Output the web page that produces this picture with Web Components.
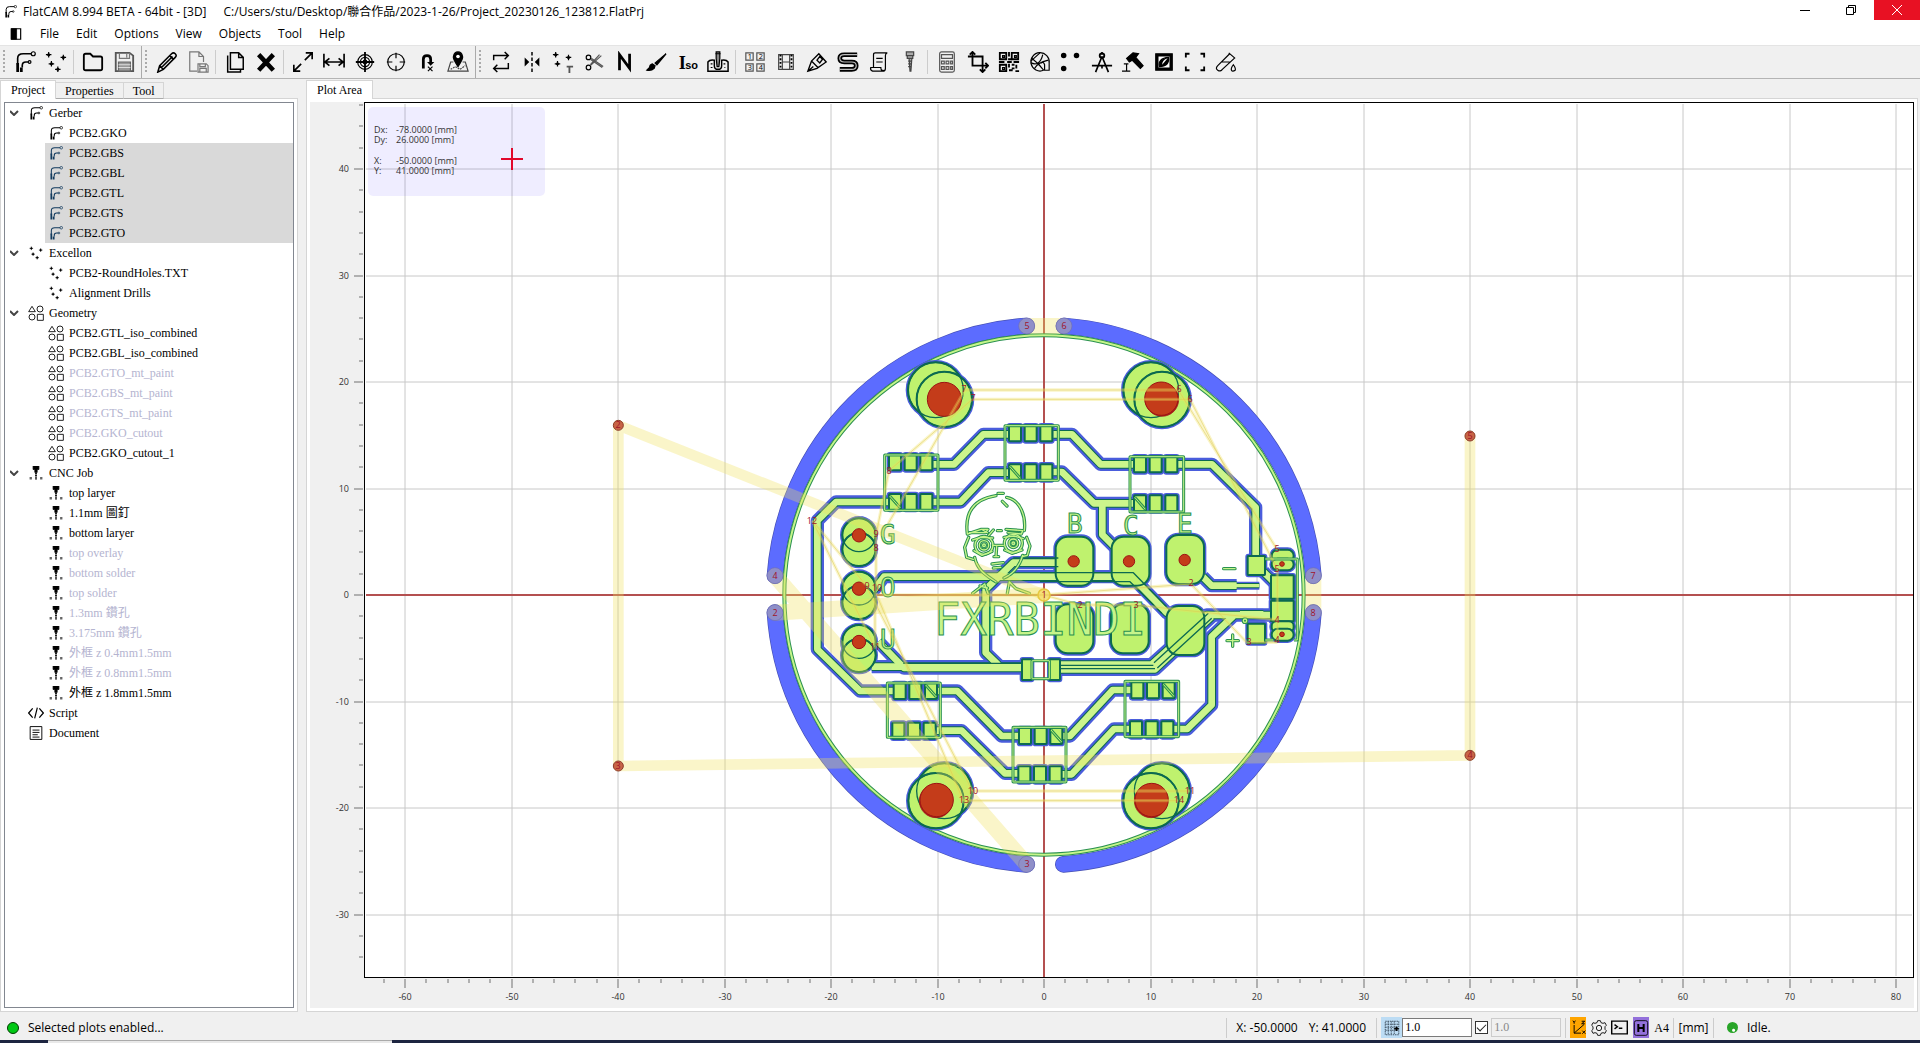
<!DOCTYPE html>
<html lang="en">
<head>
<meta charset="utf-8">
<title>FlatCAM 8.994 BETA - 64bit - [3D]</title>
<style>
html, body { margin: 0; height: 100%; }
body { font: 12px/16px "Open Sans", "Noto Sans CJK TC", sans-serif; color: #000; background: #f0f0f0; overflow: hidden; }
</style>
</head>
<body>
<fc-app>
  <fc-titlebar slot="title" app="FlatCAM 8.994 BETA - 64bit - [3D]" path="C:/Users/stu/Desktop/聯合作品/2023-1-26/Project_20230126_123812.FlatPrj"></fc-titlebar>
  <fc-menubar slot="menu" items="File,Edit,Options,View,Objects,Tool,Help"></fc-menubar>
  <fc-toolbar slot="tools" icons="gerber drills | folder save"></fc-toolbar>
  <fc-toolbar slot="tools" icons="pencil docsave | copy delete | expand distance target locate uturn map"></fc-toolbar>
  <fc-toolbar slot="tools" icons="swap mirror drillt scissors ncc brush iso mill | panel film marker paste script screw | calc crop qr punch dots compass hammer invert corners tube"></fc-toolbar>
  <fc-tabs slot="side" labels="Project,Properties,Tool"><fc-tree></fc-tree></fc-tabs>
  <fc-tabs slot="main" labels="Plot Area"><fc-plot></fc-plot></fc-tabs>
  <fc-status slot="status"></fc-status>
</fc-app>
<script>
const T = (x, y, s, size, extra = '') => `<text x="${x}" y="${y}" font-size="${size}" fill="currentColor" stroke="none" ${extra}>${s}</text>`;
const plus = (x, y, r = 3) => `<path d="M${x - r} ${y}h${2 * r}M${x} ${y - r}v${2 * r}"/><circle cx="${x}" cy="${y}" r="1" fill="currentColor"/>`;
const ICONS = {
  gerber: '<path d="M4 15V8q0-5 6-5h9M9 18v-2q0-4 4-4h3" stroke-width="1.8"/><path d="M4 13v10M8 18v5" stroke-width="3"/><circle cx="21" cy="3" r="2.2"/><circle cx="17" cy="12" r="1.5"/>',
  drills: plus(4, 4) + plus(20, 7) + plus(7, 14) + plus(14, 20),
  folder: '<path d="M2 19V5q0-2 2-2h5l3 3h8q2 0 2 2v11q0 2-2 2H4q-2 0-2-2z" stroke-width="2"/>',
  save: '<path d="M3 2h15l4 3v17H3z" stroke="#555" stroke-width="2"/><path d="M7 2v6h11V2M15 3v4" stroke="#777"/><path d="M6 12h13v10H6z" fill="#999" stroke="#666"/><path d="M6 15h13M6 18h13" stroke="#ddd"/>',
  pencil: '<path d="M2 23l2-7L17 3q2-2 4 0t0 4L8 20zM4 16l4 4M15 5l4 4M6 18L18 6" stroke-width="1.7"/>',
  docsave: '<path d="M11 22H3V1h10l5 5v6M13 1v5h5" stroke="#777"/><path d="M12 14h9l2 2v7H12zM14 14v3h6v-3M14 23v-4h7v4" stroke="#777"/>',
  copy: '<path d="M4 5v18h14v-3" stroke-width="1.6"/><path d="M7 2h9l5 5v13H7zM16 2v5h5" stroke-width="1.6"/>',
  delete: '<path d="M4 4l16 17M20 4L4 21" stroke-width="5"/>',
  expand: '<path d="M2 22l8-8M14 10l8-8M15 2h7v7M2 15v7h7" stroke-width="1.8"/>',
  distance: '<path d="M1 3v15M23 3v15M2 12h20M7 8l-5 4 5 4M17 8l5 4-5 4" stroke-width="1.8"/>',
  target: '<circle cx="12" cy="12" r="8"/><circle cx="12" cy="12" r="5"/><circle cx="12" cy="12" r="2" /><path d="M12 1v22M2 12h20" stroke-width="2"/>',
  locate: '<circle cx="12" cy="12" r="9"/><path d="M12 2v6M12 16v6M2 12h6M16 12h6"/>',
  uturn: '<path d="M8 19V9q0-4 4-4t4 4v4" stroke-width="3"/><path d="M12 12h8l-4 4z" fill="currentColor" stroke="none"/><path d="M13 17l5 5M18 17l-5 5"/>',
  map: '<path d="M7 12H4L1 22h22l-3-10h-3" stroke="#444"/><path d="M4 20l5-3 5 3 6-4" stroke-dasharray="2 1" stroke="#444"/><path d="M12 17Q6 8 7 6q1-5 5-5t5 5q1 2-5 11z" fill="currentColor"/><circle cx="12" cy="6" r="2" fill="#fff" stroke="none"/>',
  swap: '<path d="M4 10V5h16M16 1l4 4-4 4M20 13v6H4M8 15l-4 4 4 4" stroke-width="1.6"/>',
  mirror: '<path d="M12 1v22" stroke-dasharray="4 2" stroke-width="1.6"/><path d="M4 7l5 5-5 5zM20 7l-5 5 5 5z" fill="currentColor" stroke="none"/>',
  drillt: plus(4, 4) + plus(18, 7) + plus(6, 14) + '<path d="M16 17h7M19 17v7" stroke-width="2" stroke="#555"/>',
  scissors: '<circle cx="6" cy="7" r="2.5"/><circle cx="6" cy="18" r="2.5"/><path d="M8 9l13 9M8 16L20 5M9 8l13 9M8 15L18 4" stroke="#555"/>',
  ncc: '<path d="M6 21V4l11 15V3" stroke-width="3"/>',
  brush: '<path d="M23 3L11 13l2 2z" fill="currentColor"/><path d="M2 21q5 1 8-2l1-3-3-2q-3 1-3 4z" fill="currentColor"/>',
  iso: T(3, 20, 'I', 20, 'font-family="Liberation Serif" font-weight="bold"') + T(10, 20, 'so', 12, 'font-family="Liberation Sans" font-weight="bold"'),
  mill: '<path d="M10 1h4v7l-1 9h-2L10 8zM9 3h6" fill="#888"/><path d="M1 22V12q2-3 7-2v6q0 4 4 4t4-4v-6q5-1 7 2v10z" stroke-width="1.6"/><path d="M4 14h2M18 14h2M4 18h2M19 18h1"/>',
  panel: '<path d="M2 2h8v8H2zM14 2h8v8h-8zM2 14h8v8H2zM14 14h8v8h-8z" stroke="#555"/>' + T(4, 9, '1', 8) + T(16, 9, '2', 8) + T(4, 21, '3', 8) + T(16, 21, '4', 8),
  film: '<path d="M4 4h16v16H4zM8 4v16M16 4v16M8 12h8" stroke="#444"/><path d="M6 4v16M18 4v16" stroke-dasharray="2 2" stroke-width="2"/>',
  marker: '<path d="M2 22l4-11 8-8 8 9-10 7zM6 11l7 7M12 10l3-4 3 3-3 4zM2 22l6-5" stroke-width="1.5"/>',
  paste: '<path d="M22 4H8q-5 0-5 4t5 4h8q5 0 5 4t-5 4H3" stroke-width="5"/><path d="M22 4H8q-5 0-5 4t5 4h8q5 0 5 4t-5 4H3" stroke="#bbb"/>',
  script: '<path d="M6 18V4q0-2 2-2h13q-2 1-2 3v14q0 3-3 3H5q-3-1-2-4h11q0 4 3 3M9 8h7M9 12h7"/>',
  screw: '<path d="M8 1h8v4H8zM9 5h6v3H9zM10 8h4l-1 14h-1L11 8M10 11h4M10 14h4M10 17h4" fill="#aaa" stroke="#444"/>',
  calc: '<rect x="4" y="1" width="16" height="22" rx="2" stroke="#555"/><path d="M6 4h12v4H6zM6 11h3v3H6zM11 11h3v3h-3zM16 11h2v3h-2zM6 17h3v3H6zM11 17h3v3h-3zM16 17h2v3h-2z" stroke="#555"/>',
  crop: '<path d="M6 1v15h17M1 6h16v16M3 4l3-3 3 3M20 13l3 3-3 3M14 20l3 3 3-3" stroke-width="2"/>',
  qr: '<path d="M2 2h7v7H2zM15 2h7v7h-7zM2 15h7v7H2z" stroke-width="2"/><path d="M5 5h2v2H5zM18 5h2v2h-2zM5 18h2v2H5z"/><path d="M12 1v5M11 9h4M1 12h6M10 12h5M17 12h6M12 14v4M15 15h3M20 15v4M15 19h3M12 21h4M19 22h4" stroke-width="2"/>',
  punch: '<path d="M16 21A10 10 0 1 1 22 13v8h-5v-6q-1-4-4-2"/><path d="M2 11l10-9M3 8q8 6 13 13M2 13q10 4 13-9M6 19q3-6 15-9"/>',
  dots: '<g fill="currentColor" stroke="none"><circle cx="4" cy="5" r="3"/><circle cx="18" cy="5" r="3"/><circle cx="4" cy="19" r="3"/></g>',
  compass: '<path d="M12 6L5 23M12 6l7 17M1 16h22M12 1v3M12 15v4" stroke-width="1.8"/><circle cx="12" cy="5" r="2.5" stroke-width="2"/>',
  hammer: '<path d="M5 8l7-6 6 1-3 4 8 9-3 3-9-9-3 2z" fill="currentColor"/><path d="M0 22h9M5 22v-8M2 14h5"/>',
  invert: '<path d="M3 3h18v18H3z" fill="currentColor"/><path d="M6 6h12v12H6z" fill="#fff" stroke="none"/><path d="M7 17q-2-9 10-10 1 10-10 10z" fill="currentColor"/><path d="M10 15q0-5 6-7z" fill="#fff" stroke="none"/>',
  corners: '<path d="M2 7V3h4M18 3h4v4M22 17v4h-4M6 21H2v-4" stroke-width="2"/>',
  tube: '<path d="M15 2l7 6M16 3L3 16q-3 3 0 5t5-1L21 8M7 12h9"/><path d="M20 15q-3 4-2 6t4 0q1-2-2-6z"/>',
  geometry: '<path d="M6 2l5 8H1z"/><circle cx="18" cy="6" r="4.5"/><circle cx="6" cy="18" r="4.5"/><path d="M14 14h9v9h-9z"/>',
  cnc: '<path d="M7 0h10v6h-3v5h-4V6H7z" fill="currentColor"/><path d="M12 12v11" stroke-width="3" stroke-dasharray="2 1"/><path d="M1 21h4M19 21h4" stroke-width="4" stroke="#666"/>',
  code: '<path d="M7 5L1 12l6 7M17 5l6 7-6 7M14 4l-4 16" stroke-width="1.8"/>',
  document: '<path d="M2 1h20v22H2z" stroke-width="1.6"/><path d="M6 7h12M6 11h12M6 15h9M6 19h12" stroke-width="1.6"/>',
  contrast: '<path d="M4 3h16v18H4z" stroke-width="2"/><path d="M4 3h9v18H4z" fill="currentColor"/>',
  gridsnap: '<path d="M3 3h18v18H3zM7 3v18M11 3v18M15 3v18M3 7h18M3 11h18M3 15h18" stroke="#456" stroke-dasharray="2 1"/><path d="M18 10v6M15 13h6" stroke-width="2"/>',
  axes: '<path d="M5 8v13h11M5 21L21 7M3 1l2 3 2-3M5 4v2M17 2h5l-5 4h5M18 17l5 5M23 17l-5 5" stroke-width="1.5"/>',
  gear: '<circle cx="12" cy="12" r="4"/><path d="M10 1h4l1 3 3 1 3-1 2 4-2 2v4l2 2-2 4-3-1-3 1-1 3h-4l-1-3-3-1-3 1-2-4 2-2v-4L1 8l2-4 3 1 3-1z"/>',
  terminal: '<path d="M1 3h22v18H1z" stroke-width="2"/><path d="M5 8l4 3-4 3M11 13h5" stroke-width="2"/>',
  hud: '<rect x="2" y="1" width="20" height="22" rx="3"/><path d="M8 6v12M16 6v12M8 12h8" stroke-width="3"/>'
};
const icon = (name, size) => `<svg width="${size}" height="${size}" viewBox="0 0 24 24" fill="none" stroke="currentColor" stroke-width="1.3" aria-hidden="true">${ICONS[name]}</svg>`;
const BASE = `:host,*{box-sizing:border-box} svg{display:block;flex:none} button,input{font:inherit;color:inherit;margin:0} button{border:0;background:none;padding:0}`;
function define(name, render) {
  customElements.define(name, class extends HTMLElement {
    connectedCallback() {
      if (this.shadowRoot) return;
      this.attachShadow({ mode: 'open' }).innerHTML = render(this);
    }
  });
}

define('fc-app', () => `<style>${BASE}
  :host{display:flex;flex-direction:column;height:100vh;background:#f0f0f0}
  .tools{display:flex;height:34px;border-top:1px solid #e4e4e4;border-bottom:1px solid #b4b4b4;background:#f0f0f0}
  .work{flex:1;min-height:0;display:flex;gap:8px;padding:1px 2px 0 0}
  .side{flex:none;width:298px;display:flex}
  .main{flex:1;min-width:0;display:flex}
  .os{height:3px;display:flex;background:#1d2540}
  .os span{margin-left:48px;width:344px;background:#e9e9e9;border-top:1px solid #aaa}
  </style>
  <slot name="title"></slot><slot name="menu"></slot>
  <div class="tools"><slot name="tools"></slot></div>
  <div class="work"><div class="side"><slot name="side"></slot></div><div class="main"><slot name="main"></slot></div></div>
  <slot name="status"></slot><div class="os"><span></span></div>`);

define('fc-titlebar', el => `<style>${BASE}
  :host{display:flex;align-items:center;height:23px;background:#fff;padding-left:4px}
  .t{margin-left:6px;white-space:pre} .p{margin-left:17px;flex:1;white-space:pre}
  .w{align-self:flex-start;width:46px;height:20px;display:grid;place-items:center}
  .x{background:#e81123;color:#fff}
  </style>${icon('gerber', 13)}<span class="t">${el.getAttribute('app')}</span><span class="p">${el.getAttribute('path')}</span>
  <button class="w" aria-label="Minimize"><svg width="10" height="10"><path d="M0 5h10v1H0z"/></svg></button>
  <button class="w" aria-label="Restore"><svg width="10" height="10" fill="none" stroke="#000"><path d="M.5 2.5h7v7h-7zM2.5 2.5v-2h7v7h-2"/></svg></button>
  <button class="w x" aria-label="Close"><svg width="10" height="10" stroke="#fff"><path d="M0 0l10 10M10 0L0 10"/></svg></button>`);

define('fc-menubar', el => `<style>${BASE}
  :host{display:flex;align-items:center;gap:17px;height:22px;background:#fff;padding-left:9px}
  </style>${icon('contrast', 14)}${el.getAttribute('items').split(',').map(t => `<button>${t}</button>`).join('')}`);

define('fc-toolbar', el => `<style>${BASE}
  :host{display:flex;align-items:center;padding:0 2px 0 3px;border-right:1px solid #aaa;flex:none}
  :host(:last-of-type){border-right:0}
  .g{width:2px;height:24px;margin-right:4px;background:repeating-linear-gradient(#aaa 0 2px,transparent 2px 4px)}
  button{width:31px;height:30px;display:grid;place-items:center}
  i{width:1px;height:24px;background:#ccc;margin:0 3px 0 2px}
  </style><span class="g"></span>${el.getAttribute('icons').split(' ').map(n => n === '|' ? '<i></i>' : `<button aria-label="${n}">${icon(n, 22)}</button>`).join('')}`);

define('fc-tabs', el => `<style>${BASE}
  :host{display:flex;flex-direction:column;flex:1;min-width:0;font-family:"Liberation Serif","Noto Sans CJK TC",serif}
  .tabs{display:flex;align-items:flex-end;height:19px;margin-bottom:-1px;position:relative}
  button{height:17px;padding:0 9px;border:1px solid #d5d5d5;border-left:0;border-bottom-color:#aaa;line-height:14px}
  button:first-child{height:19px;padding:0 10px;border-left:1px solid #d5d5d5;border-bottom:0;background:#fff}
  .pane{flex:1;min-height:0;display:flex;background:#fff;border:1px solid #d5d5d5;padding:3px}
  </style><div class="tabs" role="tablist">${el.getAttribute('labels').split(',').map((t, i) => `<button role="tab" aria-selected="${!i}">${t}</button>`).join('')}</div>
  <div class="pane"><slot></slot></div>`);

const ROWS = [
  ['gerber', 'Gerber', 0], ['gerber', 'PCB2.GKO', 1], ['gerber', 'PCB2.GBS', 1, 'sel'], ['gerber', 'PCB2.GBL', 1, 'sel'], ['gerber', 'PCB2.GTL', 1, 'sel'],
  ['gerber', 'PCB2.GTS', 1, 'sel'], ['gerber', 'PCB2.GTO', 1, 'sel'], ['drills', 'Excellon', 0], ['drills', 'PCB2-RoundHoles.TXT', 1], ['drills', 'Alignment Drills', 1],
  ['geometry', 'Geometry', 0], ['geometry', 'PCB2.GTL_iso_combined', 1], ['geometry', 'PCB2.GBL_iso_combined', 1], ['geometry', 'PCB2.GTO_mt_paint', 1, 'off'],
  ['geometry', 'PCB2.GBS_mt_paint', 1, 'off'], ['geometry', 'PCB2.GTS_mt_paint', 1, 'off'], ['geometry', 'PCB2.GKO_cutout', 1, 'off'], ['geometry', 'PCB2.GKO_cutout_1', 1],
  ['cnc', 'CNC Job', 0], ['cnc', 'top laryer', 1], ['cnc', '1.1mm 圖釘', 1], ['cnc', 'bottom laryer', 1], ['cnc', 'top overlay', 1, 'off'], ['cnc', 'bottom solder', 1, 'off'],
  ['cnc', 'top solder', 1, 'off'], ['cnc', '1.3mm 鑽孔', 1, 'off'], ['cnc', '3.175mm 鑽孔', 1, 'off'], ['cnc', '外框 z 0.4mm1.5mm', 1, 'off'], ['cnc', '外框 z 0.8mm1.5mm', 1, 'off'],
  ['cnc', '外框 z 1.8mm1.5mm', 1], ['code', 'Script', 2], ['document', 'Document', 2]
];
define('fc-tree', () => `<style>${BASE}
  :host{display:block;flex:1;background:#fff;border:1px solid #828790;overflow:hidden}
  .r{height:20px;display:flex;align-items:center;white-space:pre}
  .a{width:23px;display:grid;place-items:center;padding-right:5px}
  .i{width:16px;display:grid;place-items:center;margin-right:5px}
  .l1{margin-left:40px;padding-left:3px} .sel{background:#d9d9d9} .sel .i{color:#123a5e} .off span{color:#b4b4d0}
  </style><div role="tree">${ROWS.map(([ic, t, l, c = '']) => `<div role="treeitem" class="r l${l} ${c}">${l === 1 ? '' : `<div class="a">${l ? '' : '<svg width="9" height="6" fill="none" stroke="#444" stroke-width="2"><path d="M0 1l4 4 4-4"/></svg>'}</div>`}<div class="i">${icon(ic, ic === 'geometry' || ic === 'code' ? 16 : 14)}</div><span>${t}</span></div>`).join('')}</div>`);

/* Board artwork lives on a fine canvas: 3 units per pixel, board centre at (882,885). */
const OX = 1044, OY = 595, U = 10.65;
const rr = (x1, y1, x2, y2, r) => `<rect x="${x1}" y="${y1}" width="${x2 - x1}" height="${y2 - y1}" rx="${r}"/>`;
const cc = (x, y, r) => `<circle cx="${x}" cy="${y}" r="${r}"/>`;
function board() {
  const traces = [
    'M550 493H612L700 403H780', 'M420 606H258L202 662V1048L330 1173H440', 'M550 606H632L715 518H780', 'M910 403H966L1052 493H1160', 'M910 516H936L1032 610H1160',
    'M1057 610V704L1098 745', 'M1280 493H1386L1517 622V790', 'M1540 815L1580 855', 'M930 788H790L707 868V1058L745 1095', 'M370 872L402 830H1145L1250 938L1290 960',
    'M365 1100H820', 'M385 1025L462 1104H820', 'M920 1094H1204L1370 945H1560', 'M920 1108H1215L1385 950', 'M1450 948L1385 1010V1215L1312 1287H1260', 'M1358 830L1385 857H1460',
    'M560 1173H622L755 1308H810', 'M560 1292H635L765 1420H810', 'M930 1308H960L1088 1170H1150', 'M930 1423H965L1092 1287H1150'
  ].map(d => `<path d="${d}"/>`).join('');
  const thin = '<path d="M1455 857H1528M1470 938H1540"/>';
  const rows = [[435, 487], [435, 606], [795, 400], [795, 517], [1170, 493], [1170, 610], [449, 1173], [445, 1292], [825, 1308], [823, 1423], [1162, 1171], [1158, 1288]];
  const chips = rows.map(([x, y]) => [0, 47, 94].map(k => rr(x + k - 18, y - 24, x + k + 18, y + 24, 3)).join('')).join('');
  const pads = [[917, 710], [1085, 710], [1249, 705], [917, 913], [1083, 913], [1250, 918]].map(([x, y]) => rr(x, y, x + 113, y + 147, 36)).join('')
    + rr(1493, 768, 1545, 825, 2) + rr(1563, 826, 1631, 896, 2) + rr(1563, 902, 1631, 964, 2) + rr(1493, 971, 1545, 1030, 2)
    + rr(1565, 749, 1631, 786, 18) + rr(1565, 776, 1631, 811, 18) + rr(1565, 964, 1631, 996, 14) + rr(1565, 986, 1631, 1022, 18)
    + rr(816, 1078, 846, 1140, 2) + rr(898, 1078, 930, 1140, 2);
  const rounds = [[327, 705], [327, 748], [327, 865], [327, 907], [327, 1025], [327, 1066]].map(([x, y]) => cc(x, y, 50)).join('')
    + [[557, 270], [583, 298], [1203, 270], [1236, 298], [583, 1473], [558, 1502], [1236, 1473], [1203, 1502]].map(([x, y]) => cc(x, y, 83)).join('');
  const frames = [[404, 465, 564, 631], [765, 377, 925, 541], [1140, 470, 1301, 636], [412, 1149, 571, 1312], [789, 1282, 948, 1446], [1125, 1144, 1286, 1310], [846, 1082, 898, 1136]].map(f => rr(...f, 1)).join('')
    + '<path d="M1546 777H1642V1020H1632M1546 1020H1570"/>';
  const diag = [[435, 606], [795, 517], [1170, 610], [543, 1173], [919, 1308], [1256, 1171]].map(([x, y]) => `<path d="M${x - 16} ${y - 18}l32 36"/>`).join('');
  const face = `<path d="M652 702C644 640 668 598 738 587M744 580h16M770 592C812 600 828 650 823 692M757 604l14 14M652 702l42-14h20l-8 10h-48M768 688l50 4-4 10-40-4M656 712l-12 30 6 30 20 6M830 712l10 26-8 28-16 4M674 772C682 812 712 828 738 846M818 766C808 802 788 822 762 834M738 770l2-30M732 770h14M726 792l34-4M730 804l22-2M668 720l24-8 36 2M762 712l30-4 28 8M672 752l24 14 30-12M764 750l22 10 30-10M668 880l36-28 10 28M690 858l22 6M772 880l6-34 20 20 40 14M728 736h32M698 690l14 8M742 692h12M716 706l14-16"/>${cc(702, 736, 27)}${cc(702, 736, 14)}${cc(702, 736, 4)}${cc(790, 730, 27)}${cc(790, 730, 13)}${cc(790, 730, 4)}<path d="M1421 806h34M1431 1022h34M1448 1005v34"/>${cc(1485, 962, 5)}`;
  const drills = [[327, 706, 20], [327, 866, 20], [327, 1026, 20], [583, 298, 51], [1234, 296, 50], [560, 1500, 50], [1205, 1500, 50], [971, 784, 17], [1137, 784, 17], [1304, 780, 17], [1596, 792, 7], [1596, 1003, 7]].map(d => cc(...d)).join('');
  const under = cc(1236, 299, 50) + cc(558, 1503, 50) + cc(1203, 1503, 50);
  const arcs = '<path d="M75 827A809 809 0 0 1 830 78M942 78A809 809 0 0 1 1690 827M1690 938A809 809 0 0 1 940 1693M830 1693A809 809 0 0 1 75 938"/>';
  const ends = [[830, 78], [942, 78], [1690, 827], [1690, 938], [830, 1693], [75, 938], [75, 827]].map(([x, y]) => cc(x, y, 24)).join('');
  const wide = '<path d="M830 78H942M1690 827V938M75 827L830 1693M75 938L882 885"/>';
  const mid = '<path d="M-395 376L882 885M-395 376V1398M-395 1398L2160 1366V408"/>';
  const fine = '<path d="M645 270H1285M667 298H1320M667 1473H1320M640 1502H1285"/><path d="M645 270L415 670M667 298L417 512L378 705V860M350 860L667 1473M378 880L640 1502M187 662L375 1042V860M350 858L187 662M1285 270L1582 750M1320 298L1582 808V1020M882 885L1323 852L1490 1027H1582M882 885L990 915H1155L1582 960M882 885H378"/>';
  const dbl = (g, w, a, b) => `<g stroke="${a}" stroke-width="${w}">${g}</g><g stroke="${b}" stroke-width="${w - 6}">${g}</g>`;
  return `<g transform="translate(750 300) scale(.33333)" fill="none" stroke-linejoin="round">
    <g stroke-linecap="round"><g stroke="#4650b4" stroke-width="50">${arcs}</g><g stroke="#5c6cff" stroke-width="46">${arcs}</g></g>
    ${dbl(cc(882, 885, 779), 12, '#2a9150', '#c6f58a')}
    <g stroke="#4a5ddc"><g stroke-width="40">${traces}</g><g stroke-width="24">${thin}</g><g stroke-width="14">${chips}${pads}${rounds}</g></g>
    <g stroke="#0c6a50"><g stroke-width="26">${traces}</g><g stroke-width="16">${thin}</g></g>
    <g stroke="#ccf58c"><g stroke-width="20">${traces}</g><g stroke-width="10">${thin}</g></g>
    <g fill="#bff26e" stroke="#0c6a50" stroke-width="6">${rounds}${pads}${chips}</g>
    <g stroke="#0c6a50" stroke-width="4">${rounds}<path d="M870 818H1150L1250 920M870 845H1140L1235 940M925 774H790M925 800H795M1212 1088L1375 940M1222 1104L1385 955M460 1090H815M930 1096H1210M930 1106H1215"/></g>
    ${dbl(frames, 9, '#2a9150', '#c6f58a')}${dbl(diag, 9, '#2a9150', '#bff26e')}
    <g stroke-linecap="round">${dbl(face, 10, '#2a9150', '#c6f58a')}</g>
    <g fill="#ad1f18" stroke="#9c1414" stroke-width="2">${under}</g><g fill="#c43c1a" stroke="#9c1414" stroke-width="3">${drills}</g>
  </g>
  <g class="silk" font-family="DejaVu Sans Mono" fill="#c6f58a" stroke="#2a9150" stroke-width="1"><text x="934" y="635" font-size="44">FXRBINDI</text>
    <g font-size="26"><text x="880" y="544">G</text><text x="880" y="597">O</text><text x="880" y="649">U</text><text x="1067" y="533">B</text><text x="1123" y="535">C</text><text x="1177" y="533">E</text></g></g>
  <g transform="translate(750 300) scale(.33333)" fill="none" stroke-linejoin="round">
    <g stroke="#f0e05a" stroke-opacity=".33"><g stroke-width="48">${wide}</g><g stroke-width="32" stroke-linecap="round">${mid}</g><g stroke-width="10">${fine}</g></g>
    <g stroke="#dcc850" stroke-opacity=".5" stroke-width="3">${fine}</g>
    <g fill="#8f8fc8" stroke="#6e6eb4" stroke-width="2">${ends}</g>
    <g fill="#c86446" stroke="#8c3c28" stroke-width="3">${cc(-395, 376, 15)}${cc(-395, 1398, 15)}${cc(2160, 1366, 15)}${cc(2160, 408, 15)}</g>
    <g stroke="#e6c840" stroke-width="5" fill="#f5dc6e" fill-opacity=".8">${cc(882, 885, 18)}</g>
  </g>`;
}
const MARKS = [[5, 830, 78], [6, 942, 78], [7, 1690, 827], [8, 1690, 938], [3, 830, 1693], [2, 75, 938], [4, 75, 827], [2, -395, 376], [3, -395, 1398], [4, 2160, 1366], [5, 2160, 408], [1, 882, 885],
  [7, 643, 268], [7, 669, 295], [8, 418, 512], [9, 379, 703], [8, 379, 745], [9, 352, 858], [10, 381, 863], [12, 187, 662], [11, 376, 1042], [6, 1288, 268], [6, 1321, 296], [5, 1582, 748], [5, 1582, 808],
  [2, 1323, 850], [2, 990, 914], [3, 1157, 914], [4, 1582, 960], [4, 1582, 1020], [3, 1496, 1027], [10, 668, 1472], [13, 643, 1501], [11, 1320, 1472], [14, 1288, 1501]];
function plot() {
  let grid = '', xt = '', yt = '';
  for (let v = -60; v <= 80; v += 10) { grid += `<path d="M${Math.round(OX + v * U)} 104V976"/>`; }
  for (let v = -30; v <= 40; v += 10) { grid += `<path d="M366 ${Math.round(OY - v * U)}H1912"/>`; }
  for (let v = -62; v <= 80; v += 2) {
    const x = Math.round(OX + v * U), m = v % 10 === 0;
    xt += `<path d="M${x} 979v${m ? 9 : 4}"/>` + (m ? `<text x="${x}" y="1000" text-anchor="middle">${v}</text>` : '');
  }
  for (let v = -34; v <= 46; v += 2) {
    const y = Math.round(OY - v * U), m = v % 10 === 0;
    yt += `<path d="M363 ${y}h-${m ? 9 : 4}"/>` + (m ? `<text x="349" y="${y + 3}" text-anchor="end">${v}</text>` : '');
  }
  return { grid, xt, yt };
}
define('fc-plot', () => {
  const { grid, xt, yt } = plot();
  return `<style>${BASE}
  :host{display:grid;flex:1;min-width:0;grid-template:minmax(0,1fr) 30px / 54px minmax(0,1fr);background:#f0f0f0;font-family:"Open Sans",sans-serif;font-size:9px}
  svg{width:100%;height:100%} .c{border:1px solid #000;background:#fff;min-height:0;position:relative}
  .ax{stroke:#b0b0b0;stroke-width:2} .ax text{fill:#333;stroke:none}
  .hud{position:absolute;left:3px;top:4px;width:177px;height:89px;border-radius:5px;background:rgba(96,80,255,.1);color:#333;line-height:10px;padding:18px 6px;display:grid;grid-template-columns:22px 1fr;align-content:start;white-space:pre}
  .gap{grid-column:1/3;height:11px}
  </style>
  <svg><g class="ax" transform="translate(-310 -102)">${yt}</g></svg>
  <div class="c"><svg><g transform="translate(-365 -103)"><g stroke="#c8c8c8" stroke-width="1">${grid}</g>
    <path d="M1044 104V977M366 595H1914" stroke="#b45050" stroke-width="2"/>${board()}
    <g fill="#a01428" text-anchor="middle">${MARKS.map(([t, x, y]) => `<text x="${Math.round(750 + x / 3)}" y="${Math.round(303 + y / 3)}">${t}</text>`).join('')}</g>
    <path d="M512 148v22M501 159h22" stroke="#f00014" stroke-width="2"/></g></svg>
    <div class="hud"><span>Dx:</span><span>-78.0000 [mm]</span><span>Dy:</span><span>26.0000 [mm]</span><span class="gap"></span><span>X:</span><span>-50.0000 [mm]</span><span>Y:</span><span>41.0000 [mm]</span></div></div>
  <span></span>
  <svg><g class="ax" transform="translate(-364 -978)">${xt}</g></svg>`;
});

define('fc-status', () => `<style>${BASE}
  :host{display:flex;align-items:center;height:28px;padding:3px 8px 0 7px;flex:none}
  .ok{width:12px;height:12px;border-radius:50%;background:#00c814;border:1px solid #003c00;margin-right:9px}
  .msg{flex:1} i{width:1px;height:20px;background:#ccc;margin:0 4px}
  .xy{width:141px;padding-left:5px;display:flex;gap:11px;white-space:pre}
  button{height:21px;display:grid;place-items:center}
  .snap{width:21px;background:#bcdcf4}
  input[type=text]{width:70px;height:19px;padding:0 2px;border:1px solid #7a7a7a;background:#fff;font-family:"Liberation Serif",serif}
  input[type=text]:disabled{border-color:#ccc;background:#f0f0f0;color:#888}
  input[type=checkbox]{appearance:none;width:13px;height:13px;border:1px solid #333;background:#fff;margin:0 3px;display:grid;place-items:center}
  input[type=checkbox]:checked::before{content:"";width:8px;height:4px;border:solid #222;border-width:0 0 1px 1px;rotate:-45deg;margin-bottom:3px}
  .o{width:16px;background:#ffa500}.g{width:25px}.t{width:17px}.h{width:16px;background:#9370db;margin:0 5px 0 5px}
  .a4{font-family:"Liberation Serif",serif}
  .unit{width:31px;text-align:center}
  .idle{width:11px;height:11px;border-radius:50%;background:radial-gradient(circle at 60% 75%,#fff 0 1px,#28a428 2px);margin:0 9px 0 9px}
  .end{width:165px}
  </style><span class="ok"></span><span class="msg">Selected plots enabled...</span><i></i>
  <div class="xy"><span>X: -50.0000</span><span>Y: 41.0000</span></div><i></i>
  <button class="snap" aria-label="Snap to grid">${icon('gridsnap', 18)}</button><input type="text" value="1.0" aria-label="Grid X">
  <input type="checkbox" checked aria-label="Link grid values"><input type="text" value="1.0" disabled aria-label="Grid Y"><i></i>
  <button class="o" aria-label="Axis">${icon('axes', 15)}</button><button class="g" aria-label="Preferences">${icon('gear', 16)}</button><button class="t" aria-label="Shell">${icon('terminal', 17)}</button>
  <button class="h" aria-label="HUD">${icon('hud', 16)}</button><button class="a4">A4</button><i></i><span class="unit">[mm]</span><i></i><span class="idle"></span><span class="end">Idle.</span>`);
</script>
</body>
</html>
